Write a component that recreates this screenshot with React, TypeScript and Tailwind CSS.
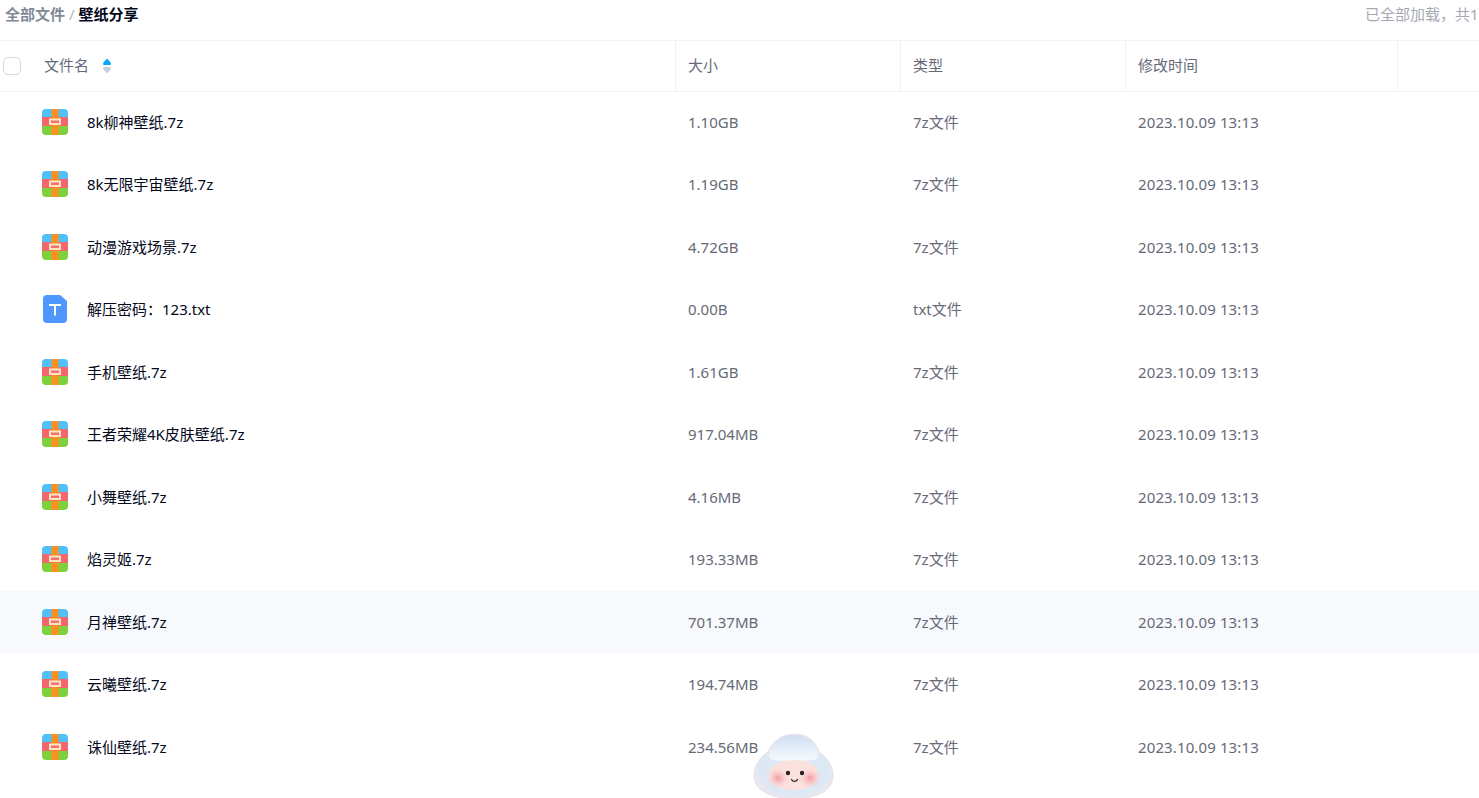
const FONT = "font-['Noto_Sans','Noto_Sans_CJK_SC',sans-serif]";

type Row = { name: string; size: string; type: string; txt?: boolean; hover?: boolean };

const rows: Row[] = [
  { name: "8k柳神壁纸.7z", size: "1.10GB", type: "7z文件" },
  { name: "8k无限宇宙壁纸.7z", size: "1.19GB", type: "7z文件" },
  { name: "动漫游戏场景.7z", size: "4.72GB", type: "7z文件" },
  { name: "解压密码：123.txt", size: "0.00B", type: "txt文件", txt: true },
  { name: "手机壁纸.7z", size: "1.61GB", type: "7z文件" },
  { name: "王者荣耀4K皮肤壁纸.7z", size: "917.04MB", type: "7z文件" },
  { name: "小舞壁纸.7z", size: "4.16MB", type: "7z文件" },
  { name: "焰灵姬.7z", size: "193.33MB", type: "7z文件" },
  { name: "月禅壁纸.7z", size: "701.37MB", type: "7z文件", hover: true },
  { name: "云曦壁纸.7z", size: "194.74MB", type: "7z文件" },
  { name: "诛仙壁纸.7z", size: "234.56MB", type: "7z文件" },
];

function ZipIcon() {
  return (
    <svg width="26" height="26" viewBox="0 0 26 26" className="shrink-0">
      <defs>
        <clipPath id="zipclip">
          <rect width="26" height="26" rx="4" />
        </clipPath>
      </defs>
      <g clipPath="url(#zipclip)">
        <rect width="26" height="8" fill="#4fc0f8" />
        <rect y="8" width="26" height="9" fill="#f2666c" />
        <rect y="17" width="26" height="9" fill="#7fd13b" />
        <rect x="9.5" width="7" height="26" fill="#fb9022" />
        <rect x="7" y="9.5" width="12" height="6.5" fill="#fee3c6" />
        <rect x="9" y="11.5" width="8" height="2.5" fill="#f2736b" />
      </g>
    </svg>
  );
}

function TxtIcon() {
  return (
    <svg width="24" height="28" viewBox="0 0 24 28" className="shrink-0">
      <path d="M4 0H17L24 6V24a4 4 0 0 1-4 4H4a4 4 0 0 1-4-4V4a4 4 0 0 1 4-4Z" fill="#4d97ff" />
      <path d="M6 10H18M12 10V20.5" stroke="#fff" strokeWidth="2" fill="none" />
    </svg>
  );
}

function SortIcon() {
  return (
    <svg width="8" height="16" viewBox="0 0 8 16" className="ml-[14px]">
      <path d="M4 0.5C5 2 8 4 8 6A1.2 1.2 0 0 1 7 7H1A1.2 1.2 0 0 1 0 6C0 4 3 2 4 0.5Z" fill="#06a7ff" />
      <path d="M4 15.5C5 14 8 12 8 10A1.2 1.2 0 0 0 7 9H1A1.2 1.2 0 0 0 0 10C0 12 3 14 4 15.5Z" fill="#c8cfdc" />
    </svg>
  );
}

function Mascot() {
  return (
    <svg width="84" height="68" viewBox="0 0 84 68" className="absolute left-[752px] top-[731px]">
      <defs>
        <radialGradient id="hood" cx="50%" cy="50%" r="58%">
          <stop offset="0%" stopColor="#dfe9f6" />
          <stop offset="75%" stopColor="#dde8f5" />
          <stop offset="100%" stopColor="#f3e8ea" />
        </radialGradient>
        <linearGradient id="cap" x1="0" y1="0" x2="0" y2="1">
          <stop offset="0%" stopColor="#cfdef2" />
          <stop offset="100%" stopColor="#f7fafd" />
        </linearGradient>
        <radialGradient id="cheek" cx="50%" cy="50%" r="50%">
          <stop offset="0%" stopColor="#f19aa4" />
          <stop offset="100%" stopColor="#fbd5d3" stopOpacity="0" />
        </radialGradient>
      </defs>
      <path d="M28 7C35 2 50 2 57 7C63 11 66 17 67 21C75 26 81 35 81 45C81 58 68 67 42 68C16 67 2 58 2 45C2 35 8 26 16 21C17 17 22 11 28 7Z" fill="url(#hood)" stroke="#e9dfe4" strokeWidth="1" />
      <path d="M17 44C17 35 26 29 42 29C58 29 66 35 66 44C66 53 56 59 42 59C28 59 17 53 17 44Z" fill="#fbe2df" />
      <ellipse cx="26" cy="47" rx="12" ry="11" fill="url(#cheek)" />
      <ellipse cx="58" cy="47" rx="12" ry="11" fill="url(#cheek)" />
      <path d="M17 25C15 14 27 4 42 4C57 4 68 14 66 25C65 30 58 30 42 29C26 30 18 30 17 25Z" fill="url(#cap)" />
      <circle cx="36" cy="42" r="2.2" fill="#2d2228" />
      <circle cx="50" cy="42" r="2.2" fill="#2d2228" />
      <path d="M39.5 48.5C41 51 44 51 45.5 48.5" stroke="#2d2228" strokeWidth="1.4" fill="none" strokeLinecap="round" />
    </svg>
  );
}

export default function App() {
  return (
    <div className={`relative h-[798px] w-[1479px] overflow-hidden bg-white text-[15px] ${FONT}`}>
      <div className="flex h-[41px] items-start justify-between border-b border-[#f1f2f4] pt-[3px]">
        <div className="flex items-center pl-[5px] font-bold">
          <span className="text-[#818999]">全部文件</span>
          <span className="mx-[4px] font-normal text-[#afb3bf]">/</span>
          <span className="text-[#03081a]">壁纸分享</span>
        </div>
        <span className="w-[114px] overflow-hidden whitespace-nowrap text-[#a6a9b3]">已全部加载，共1</span>
      </div>

      <div className="grid h-[51px] grid-cols-[676px_225px_225px_272px_1fr] items-stretch border-b border-[#f1f2f4] text-[#666a77]">
        <div className="flex items-center border-r border-[#f1f2f4]">
          <span className="ml-[3px] h-[18px] w-[18px] rounded-[5px] border border-[#d5d8de] bg-white" />
          <span className="ml-[23px] pb-[2px]">文件名</span>
          <SortIcon />
        </div>
        <div className="flex items-center border-r border-[#f1f2f4] pb-[2px] pl-[12px]">大小</div>
        <div className="flex items-center border-r border-[#f1f2f4] pb-[2px] pl-[12px]">类型</div>
        <div className="flex items-center border-r border-[#f1f2f4] pb-[2px] pl-[12px]">修改时间</div>
        <div />
      </div>

      <div className="mt-[-1.25px]">
        {rows.map((r) => (
          <div
            key={r.name}
            className={`grid h-[62.5px] grid-cols-[676px_225px_225px_272px_1fr] items-center text-[#666a77] ${
              r.hover ? "bg-[#f7f9fd]" : ""
            }`}
          >
            <div className="flex items-center pl-[42px]">
              <span className="mt-[-0.5px] flex w-[26px] justify-center">{r.txt ? <TxtIcon /> : <ZipIcon />}</span>
              <span className="ml-[19px] text-[#03081a]">{r.name}</span>
            </div>
            <div className="pl-[12px]">{r.size}</div>
            <div className="pl-[12px]">{r.type}</div>
            <div className="pl-[12px] tracking-[0.12px]">2023.10.09 13:13</div>
            <div />
          </div>
        ))}
      </div>

      <Mascot />
    </div>
  );
}
